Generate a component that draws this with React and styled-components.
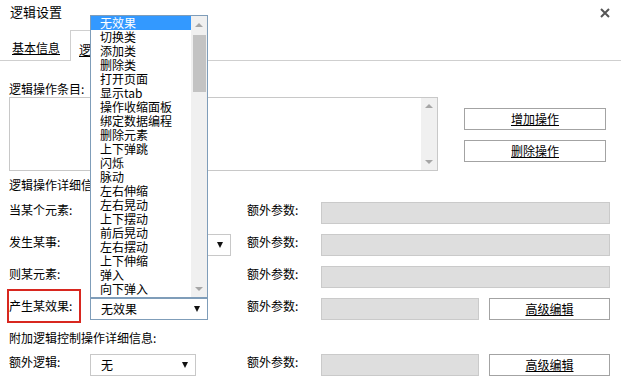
import React from "react";
import styled, { createGlobalStyle } from "styled-components";

const Global = createGlobalStyle`
  html, body { margin: 0; padding: 0; background: #fff; }
  body {
    font-family: "Noto Sans CJK SC", "Liberation Sans", sans-serif;
    font-size: 12px;
    color: #000;
  }
  * { box-sizing: border-box; }
`;

const Dialog = styled.div`
  width: 621px;
  height: 384px;
  overflow: hidden;
  background: #fff;
  display: flex;
  flex-direction: column;
`;

const Header = styled.div`
  height: 26px;
  display: flex;
  justify-content: space-between;
  align-items: center;
  padding: 0 11px 0 10px;
`;

const Title = styled.div`
  font-size: 13px;
  line-height: 23px;
  align-self: flex-start;
`;

const Close = styled.svg`
  width: 10px;
  height: 10px;
  display: block;
`;

const TabBar = styled.div`
  margin-top: 4px;
  height: 31px;
  display: flex;
  align-items: flex-end;
  border-bottom: 1px solid #cfcfcf;
`;

const Tab = styled.div`
  line-height: 14px;
  text-decoration: underline;
  padding: 0 10px 5px 12px;
  height: ${(p) => (p.$active ? "31px" : "auto")};
  ${(p) =>
    p.$active &&
    `
    border: 1px solid #cfcfcf;
    border-bottom: none;
    background: #fff;
    margin-bottom: -1px;
    padding: 12px 10px 5px 8px;
  `}
`;

const Content = styled.div`
  padding: 0 11px 0 9px;
  display: flex;
  flex-direction: column;
`;

const SectionLabel = styled.div`
  line-height: 14px;
  margin-top: ${(p) => p.$mt}px;
  white-space: nowrap;
`;

const EntryRow = styled.div`
  display: flex;
  margin-top: 1px;
`;

const TextBox = styled.div`
  width: 429px;
  height: 74px;
  border: 1px solid #c8c8c8;
  display: flex;
  justify-content: flex-end;
`;

const Scrollbar = styled.div`
  width: 16px;
  background: #f0f0f0;
  display: flex;
  flex-direction: column;
`;

const ArrowBox = styled.div`
  height: ${(p) => p.$h || 16}px;
  display: flex;
  align-items: center;
  justify-content: center;
  flex: none;
`;

const Tri = styled.span`
  width: 0;
  height: 0;
  border-left: 4px solid transparent;
  border-right: 4px solid transparent;
  ${(p) =>
    p.$up
      ? `border-bottom: 4px solid ${p.$c || "#a6a6a6"};`
      : `border-top: 4px solid ${p.$c || "#a6a6a6"};`}
`;

const Spacer = styled.div`
  flex: 1;
`;

const Thumb = styled.div`
  height: 57px;
  margin: 2px 1px 0 2px;
  background: #c3c3c3;
  flex: none;
`;

const ButtonCol = styled.div`
  margin-left: 26px;
  padding-top: 11px;
  display: flex;
  flex-direction: column;
  gap: 10px;
`;

const Button = styled.div`
  width: ${(p) => p.$w}px;
  height: 22px;
  border: 1px solid #a3a3a3;
  background: #fff;
  display: flex;
  align-items: center;
  justify-content: center;
  text-decoration: underline;
  line-height: 20px;
  flex: none;
`;

const Row = styled.div`
  display: grid;
  grid-template-columns: 81px 157px 74px 289px;
  height: 22px;
  margin-top: ${(p) => p.$mt ?? 10}px;
  align-items: start;
`;

const Label = styled.div`
  line-height: 14px;
  padding-top: 1px;
  white-space: nowrap;
  position: relative;
  ${(p) =>
    p.$boxed &&
    `
    &::after {
      content: "";
      position: absolute;
      left: -2px;
      top: -9px;
      width: 70px;
      height: 30px;
      border: 2px solid #d8271f;
    }
  `}
`;

const SelectWrap = styled.div`
  position: relative;
  width: ${(p) => p.$w}px;
`;

const Select = styled.div`
  width: 100%;
  height: 22px;
  border: 1px solid ${(p) => (p.$focus ? "#7f9db9" : "#c8c8c8")};
  background: #fff;
  display: flex;
  align-items: center;
  justify-content: space-between;
  padding: 0 7px 0 10px;
  line-height: 20px;
`;

const DownArrow = styled.span`
  width: 0;
  height: 0;
  border-left: 3px solid transparent;
  border-right: 3px solid transparent;
  border-top: 6px solid #111;
`;

const GrayInput = styled.div`
  width: ${(p) => (p.$w ? `${p.$w}px` : "100%")};
  height: 22px;
  background: #dedede;
  border: 1px solid #cacaca;
  flex: none;
`;

const InputGroup = styled.div`
  display: flex;
  gap: 10px;
`;

const List = styled.div`
  position: absolute;
  left: 0;
  bottom: 100%;
  width: 118px;
  height: 283px;
  border: 1px solid #7f9db9;
  background: #fff;
  display: flex;
  z-index: 10;
`;

const Items = styled.div`
  flex: 1;
  overflow: hidden;
`;

const Item = styled.div`
  height: 14px;
  line-height: 14px;
  padding-left: 9px;
  white-space: nowrap;
  background: ${(p) => (p.$sel ? "#3399ff" : "transparent")};
  color: ${(p) => (p.$sel ? "#fff" : "#000")};
`;

const effects = [
  "无效果", "切换类", "添加类", "删除类", "打开页面", "显示tab", "操作收缩面板",
  "绑定数据编程", "删除元素", "上下弹跳", "闪烁", "脉动", "左右伸缩", "左右晃动",
  "上下摆动", "前后晃动", "左右摆动", "上下伸缩", "弹入", "向下弹入", "向上弹入",
];

function Param({ withButton }) {
  return (
    <>
      <Label>额外参数:</Label>
      {withButton ? (
        <InputGroup>
          <GrayInput $w={158} />
          <Button $w={121}>高级编辑</Button>
        </InputGroup>
      ) : (
        <GrayInput />
      )}
    </>
  );
}

export default function App() {
  return (
    <>
      <Global />
      <Dialog>
        <Header>
          <Title>逻辑设置</Title>
          <Close viewBox="0 0 10 10">
            <path d="M1 1 L9 9 M9 1 L1 9" stroke="#555" strokeWidth="2" />
          </Close>
        </Header>
        <TabBar>
          <Tab>基本信息</Tab>
          <Tab $active>逻辑设置</Tab>
        </TabBar>
        <Content>
          <SectionLabel $mt={21}>逻辑操作条目:</SectionLabel>
          <EntryRow>
            <TextBox>
              <Scrollbar>
                <ArrowBox><Tri $up /></ArrowBox>
                <Spacer />
                <ArrowBox><Tri /></ArrowBox>
              </Scrollbar>
            </TextBox>
            <ButtonCol>
              <Button $w={142}>增加操作</Button>
              <Button $w={142}>删除操作</Button>
            </ButtonCol>
          </EntryRow>
          <SectionLabel $mt={7}>逻辑操作详细信息:</SectionLabel>
          <Row>
            <Label>当某个元素:</Label>
            <SelectWrap $w={118}>
              <Select><span /><DownArrow /></Select>
            </SelectWrap>
            <Param />
          </Row>
          <Row>
            <Label>发生某事:</Label>
            <SelectWrap $w={141}>
              <Select><span /><DownArrow /></Select>
            </SelectWrap>
            <Param />
          </Row>
          <Row>
            <Label>则某元素:</Label>
            <SelectWrap $w={118}>
              <Select><span /><DownArrow /></Select>
            </SelectWrap>
            <Param />
          </Row>
          <Row>
            <Label $boxed>产生某效果:</Label>
            <SelectWrap $w={118}>
              <List>
                <Items>
                  {effects.map((e, i) => (
                    <Item key={e} $sel={i === 0}>{e}</Item>
                  ))}
                </Items>
                <Scrollbar>
                  <ArrowBox $h={17}><Tri $up /></ArrowBox>
                  <Thumb />
                  <Spacer />
                  <ArrowBox $h={17}><Tri /></ArrowBox>
                </Scrollbar>
              </List>
              <Select $focus><span>无效果</span><DownArrow /></Select>
            </SelectWrap>
            <Param withButton />
          </Row>
          <SectionLabel $mt={11}>附加逻辑控制操作详细信息:</SectionLabel>
          <Row $mt={9}>
            <Label>额外逻辑:</Label>
            <SelectWrap $w={106}>
              <Select><span>无</span><DownArrow /></Select>
            </SelectWrap>
            <Param withButton />
          </Row>
        </Content>
      </Dialog>
    </>
  );
}
